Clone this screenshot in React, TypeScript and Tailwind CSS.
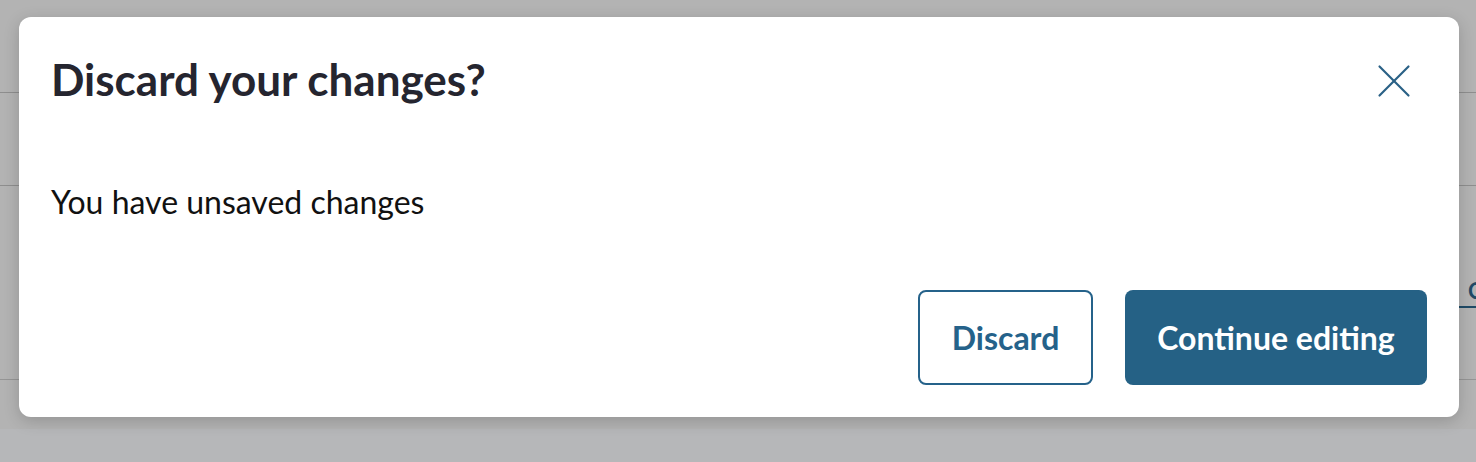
import { X } from 'lucide-react'

export default function App() {
  return (
    <div
      className="relative h-[462px] w-full overflow-hidden bg-[#b3b3b3]"
      style={{ fontFamily: 'Lato, "Noto Sans", sans-serif' }}
    >
      {/* dimmed page behind the dialog */}
      <div className="flex h-full flex-col">
        <div className="h-[93px] shrink-0 border-b border-[#8e8e8e]" />
        <div className="h-[93px] shrink-0 border-b border-[#8e8e8e]" />
        <div className="flex h-[122px] shrink-0 items-end justify-end">
          <div className="w-[30px] overflow-hidden whitespace-nowrap border-b-2 border-[#1f4a66] pb-[4px] pl-[22px] text-[22px] font-bold leading-none text-[#1f4a66]">
            Co
          </div>
        </div>
        <div className="h-[72px] shrink-0 border-b border-[#959595]" />
        <div className="h-[49px] shrink-0" />
        <div className="flex-1 bg-[#b6b7b9]" />
      </div>

      {/* dialog */}
      <div className="absolute left-[19px] top-[17px] flex h-[400px] w-[1440px] flex-col rounded-[12px] bg-white p-8 shadow-[0_4px_16px_rgba(0,0,0,0.18)]">
        <div className="flex items-start justify-between">
          <h2 className="pt-[4px] text-[44px] font-bold leading-[53px] text-[#25252f]">Discard your changes?</h2>
          <button type="button" className="mr-[4px] mt-[3px] text-[#2a6186]" aria-label="Close">
            <X className="h-[58px] w-[58px]" strokeWidth={0.9} />
          </button>
        </div>
        <p className="mt-[73px] text-[32px] leading-[38px] text-[#111111]">You have unsaved changes</p>
        <div className="mt-auto flex justify-end gap-8">
          <button
            type="button"
            className="h-[95px] w-[175px] rounded-[8px] border-2 border-[#25628a] bg-white text-[32px] font-bold text-[#25628a]"
          >
            Discard
          </button>
          <button
            type="button"
            className="h-[95px] w-[302px] rounded-[8px] bg-[#256185] text-[32px] font-bold text-white"
          >
            Continue editing
          </button>
        </div>
      </div>
    </div>
  )
}
